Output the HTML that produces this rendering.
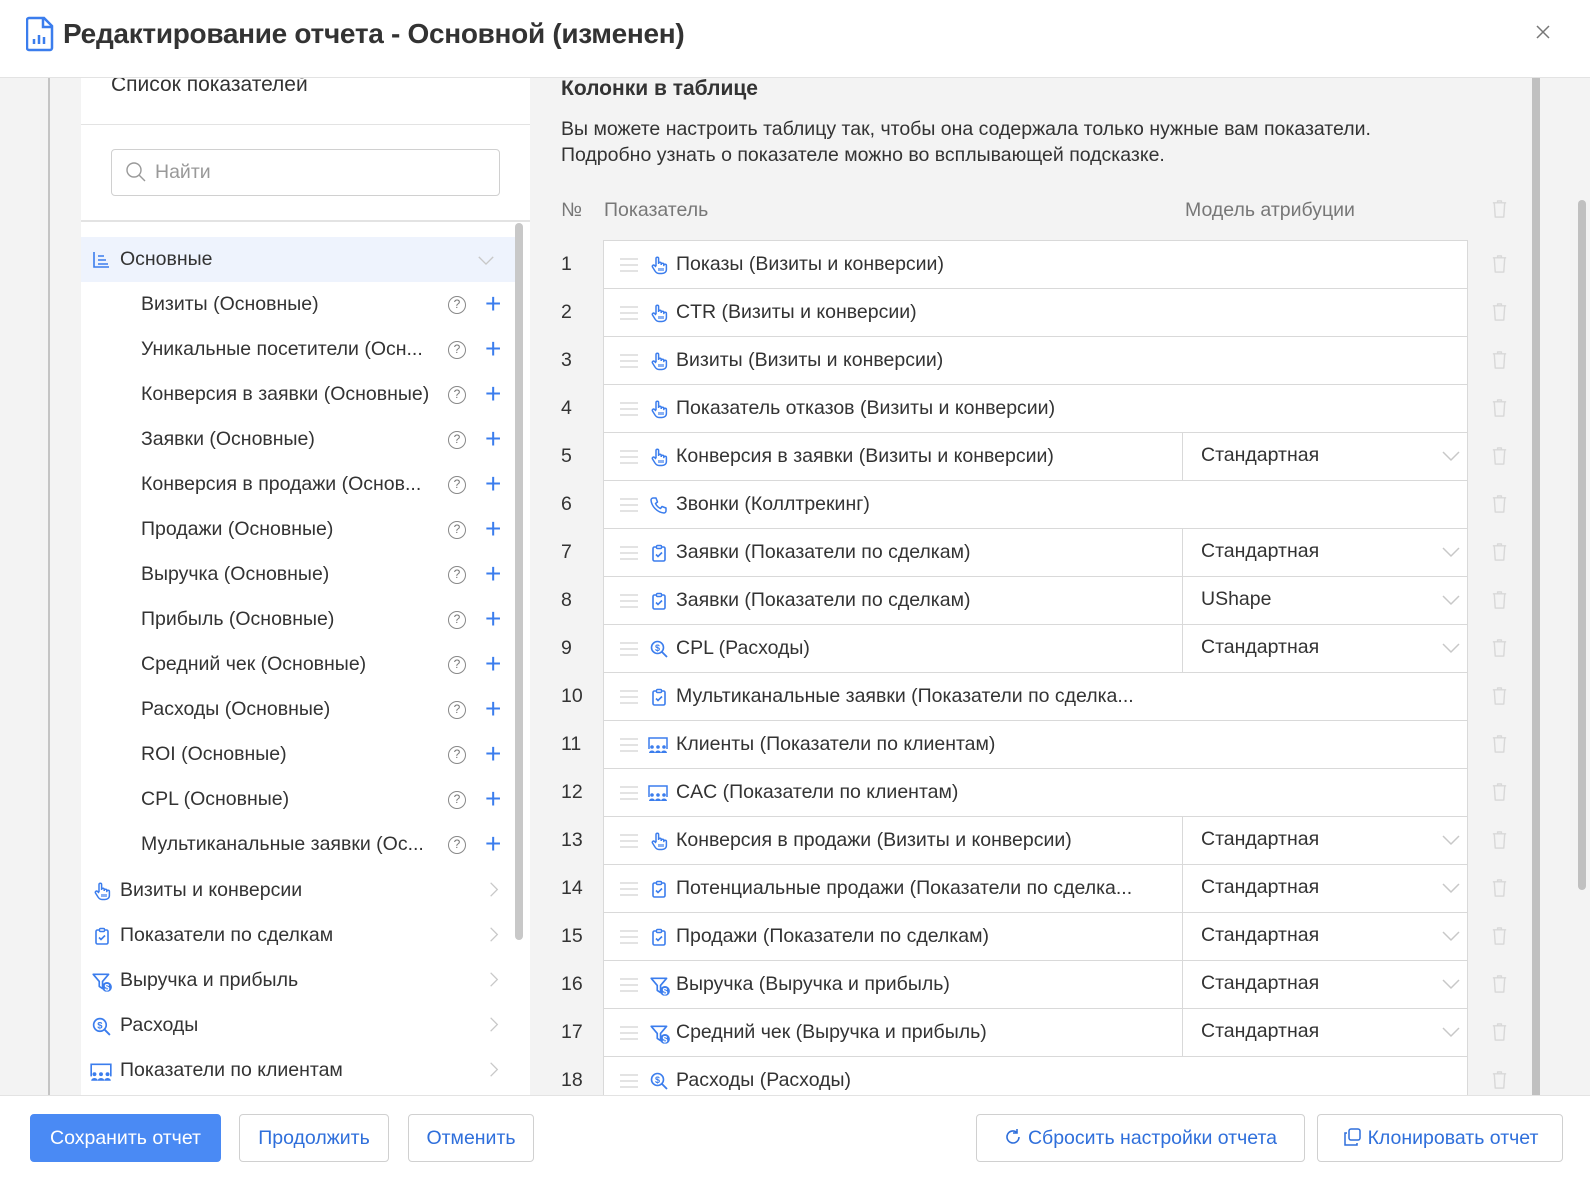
<!DOCTYPE html>
<html><head><meta charset="utf-8"><style>
*{box-sizing:border-box;margin:0;padding:0}
body{width:1590px;height:1178px;overflow:hidden;background:#f3f3f3;font-family:"Liberation Sans",sans-serif;color:#333;position:relative}
.a{position:absolute}
.hdr{left:0;top:0;width:1590px;height:78px;background:#fff;border-bottom:1px solid #e3e3e3;z-index:5}
.ttl{left:63px;top:18px;font-size:28px;font-weight:bold;color:#333;letter-spacing:-0.3px}
.lp{left:81px;top:78px;width:449px;height:1020px;background:#fff}
.li{position:absolute;font-size:19.5px;color:#333;white-space:nowrap}
.q{position:absolute;left:367px;width:18px;height:18px;border:1.5px solid #888;border-radius:50%;font-size:12px;color:#777;text-align:center;line-height:15px}
.pl{position:absolute;left:404px;font-size:28px;color:#3b7ded;font-weight:300;line-height:20px}
.row{position:absolute;left:603px;width:865px;height:49px;background:#fff;border:1px solid #d9d9d9}
.num{position:absolute;left:561px;font-size:19.5px;color:#333}
.dh{position:absolute;left:16px;top:17px;width:18px;height:14px;border-top:2px solid #e3e3e3;border-bottom:2px solid #e3e3e3}
.dh:after{content:"";position:absolute;left:0;top:4px;width:18px;height:2px;background:#e3e3e3}
.ic{position:absolute;left:45px;top:14px;width:20px;height:20px}
.tx{position:absolute;left:72px;top:12px;font-size:19.5px;white-space:nowrap;color:#333}
.at{position:absolute;left:578px;top:-1px;width:287px;height:49px;border-left:1px solid #d9d9d9}
.at span{position:absolute;left:18px;top:12px;font-size:19.5px}
.at svg{position:absolute;right:8px;top:18px}
.tr{position:absolute;left:1490px}
.btn{position:absolute;top:1114px;height:48px;border:1px solid #d0d0d0;border-radius:4px;background:#fff;color:#2f6fdb;font-size:19.5px;text-align:center;line-height:46px}
</style></head><body>
<svg width="0" height="0" style="position:absolute">
<defs>
<symbol id="hand" viewBox="0 0 20 20"><path d="M7 11V3.5a1.3 1.3 0 0 1 2.6 0V9M9.6 8.5a1.3 1.3 0 0 1 2.6 0V10M12.2 9.5a1.3 1.3 0 0 1 2.6 0v1a1.3 1.3 0 0 1 2.6 0v4c0 2.5-2 4-4.5 4H10c-2 0-3-1-4-2.5L3.5 12a1.3 1.3 0 0 1 2-1.6L7 12" fill="none" stroke="#3b7ded" stroke-width="1.5" stroke-linejoin="round"/><path d="M10 13v3M12 13v3M14 13v3" stroke="#3b7ded" stroke-width="1.2"/></symbol>
<symbol id="clip" viewBox="0 0 20 20"><rect x="4" y="4" width="12" height="14" rx="1.5" fill="none" stroke="#3b7ded" stroke-width="1.6"/><rect x="7.5" y="2.5" width="5" height="3" rx="1" fill="#fff" stroke="#3b7ded" stroke-width="1.4"/><path d="M7 11.5l2 2 4-4" fill="none" stroke="#3b7ded" stroke-width="1.6"/></symbol>
<symbol id="phone" viewBox="0 0 20 20"><path d="M4 3h3l1.5 4-2 1.5c1 2.2 2.8 4 5 5L13 11.5l4 1.5v3c0 1-1 2-2 2C8.5 17.5 2.5 11.5 2 5c0-1 1-2 2-2z" fill="none" stroke="#3b7ded" stroke-width="1.5" stroke-linejoin="round"/></symbol>
<symbol id="dol" viewBox="0 0 20 20"><circle cx="8.5" cy="8.5" r="6" fill="none" stroke="#3b7ded" stroke-width="1.6"/><path d="M13 13l5 5" stroke="#3b7ded" stroke-width="1.8"/><text x="8.5" y="12" font-size="9" font-family="Liberation Sans" font-weight="bold" fill="#3b7ded" text-anchor="middle">$</text></symbol>
<symbol id="ppl" viewBox="0 0 22 20"><path d="M2 14V3h18v11" fill="none" stroke="#3b7ded" stroke-width="1.5"/><circle cx="5" cy="12" r="1.8" fill="#3b7ded"/><circle cx="11" cy="12" r="1.8" fill="#3b7ded"/><circle cx="17" cy="12" r="1.8" fill="#3b7ded"/><path d="M2 18a3 2.5 0 0 1 6 0zM8 18a3 2.5 0 0 1 6 0zM14 18a3 2.5 0 0 1 6 0z" fill="#3b7ded"/></symbol>
<symbol id="fun" viewBox="0 0 20 20"><path d="M2 3h14l-5.5 6.5V16l-3-2V9.5z" fill="none" stroke="#3b7ded" stroke-width="1.5" stroke-linejoin="round"/><circle cx="14.5" cy="14.5" r="4.5" fill="#3b7ded"/><text x="14.5" y="17.5" font-size="8" font-family="Liberation Sans" font-weight="bold" fill="#fff" text-anchor="middle">$</text></symbol>
<symbol id="trash" viewBox="0 0 20 22"><path d="M3 5h14M8 5V3h4v2M4.5 5l1 15h9l1-15" fill="none" stroke="#d8d8d8" stroke-width="1.5" stroke-linejoin="round"/></symbol>
<symbol id="chev" viewBox="0 0 20 12"><path d="M2 2l8 8 8-8" fill="none" stroke="#c8c8c8" stroke-width="1.5"/></symbol>
<symbol id="chr" viewBox="0 0 12 20"><path d="M2 2l8 8-8 8" fill="none" stroke="#c8c8c8" stroke-width="1.5"/></symbol>
</defs></svg>

<div class="a hdr">
<svg class="a" style="left:26px;top:16px" width="28" height="36" viewBox="0 0 28 36"><path d="M3 2h15l8 8v22a2 2 0 0 1-2 2H3a2 2 0 0 1-2-2V4a2 2 0 0 1 2-2z" fill="none" stroke="#3b7ded" stroke-width="2.5"/><path d="M17 2v9h9" fill="none" stroke="#3b7ded" stroke-width="2.5"/><path d="M8 28v-5M13 28v-9M18 28v-7" stroke="#3b7ded" stroke-width="2.5"/></svg>
<div class="a ttl">Редактирование отчета - Основной (изменен)</div>
<svg class="a" style="left:1536px;top:25px" width="14" height="14"><path d="M1 1l12 12M13 1L1 13" stroke="#777" stroke-width="1.5"/></svg>
</div>

<div class="a" style="left:48px;top:78px;width:2px;height:1020px;background:#c4c4c4"></div>
<div class="a lp">
<div class="li" style="left:30px;top:-5px;font-size:21px">Список показателей</div>
<div class="a" style="left:0;top:46px;width:449px;height:1px;background:#e3e3e3"></div>
<div class="a" style="left:30px;top:71px;width:389px;height:47px;border:1px solid #d0d0d0;border-radius:4px"></div>
<svg class="a" style="left:44px;top:83px" width="22" height="22"><circle cx="9" cy="9" r="7" fill="none" stroke="#999" stroke-width="1.4"/><path d="M14 14l6 6" stroke="#999" stroke-width="1.4"/></svg>
<div class="li" style="left:74px;top:83px;color:#999">Найти</div>
<div class="a" style="left:0;top:142px;width:449px;height:2px;background:#e3e3e3"></div>
<div class="a" style="left:0;top:159px;width:434px;height:45px;background:#eef3fd"></div>
<svg class="a" style="left:11px;top:173px" width="18" height="18"><path d="M2 1v15h15M6 5h6M6 9h8M6 13h10" fill="none" stroke="#3b7ded" stroke-width="1.6"/></svg>
<div class="li" style="left:39px;top:170px">Основные</div>
<svg class="a" style="left:396px;top:177px" width="18" height="11"><use href="#chev"/></svg>
<div class="a" style="left:434px;top:145px;width:8px;height:717px;background:#c8c8c8;border-radius:4px"></div>

<div class="li" style="left:60px;top:215px">Визиты (Основные)</div><div class="q" style="top:218px">?</div><div class="pl" style="top:216px">+</div>
<div class="li" style="left:60px;top:260px">Уникальные посетители (Осн...</div><div class="q" style="top:263px">?</div><div class="pl" style="top:261px">+</div>
<div class="li" style="left:60px;top:305px">Конверсия в заявки (Основные)</div><div class="q" style="top:308px">?</div><div class="pl" style="top:306px">+</div>
<div class="li" style="left:60px;top:350px">Заявки (Основные)</div><div class="q" style="top:353px">?</div><div class="pl" style="top:351px">+</div>
<div class="li" style="left:60px;top:395px">Конверсия в продажи (Основ...</div><div class="q" style="top:398px">?</div><div class="pl" style="top:396px">+</div>
<div class="li" style="left:60px;top:440px">Продажи (Основные)</div><div class="q" style="top:443px">?</div><div class="pl" style="top:441px">+</div>
<div class="li" style="left:60px;top:485px">Выручка (Основные)</div><div class="q" style="top:488px">?</div><div class="pl" style="top:486px">+</div>
<div class="li" style="left:60px;top:530px">Прибыль (Основные)</div><div class="q" style="top:533px">?</div><div class="pl" style="top:531px">+</div>
<div class="li" style="left:60px;top:575px">Средний чек (Основные)</div><div class="q" style="top:578px">?</div><div class="pl" style="top:576px">+</div>
<div class="li" style="left:60px;top:620px">Расходы (Основные)</div><div class="q" style="top:623px">?</div><div class="pl" style="top:621px">+</div>
<div class="li" style="left:60px;top:665px">ROI (Основные)</div><div class="q" style="top:668px">?</div><div class="pl" style="top:666px">+</div>
<div class="li" style="left:60px;top:710px">CPL (Основные)</div><div class="q" style="top:713px">?</div><div class="pl" style="top:711px">+</div>
<div class="li" style="left:60px;top:755px">Мультиканальные заявки (Ос...</div><div class="q" style="top:758px">?</div><div class="pl" style="top:756px">+</div>

<svg class="a" style="left:11px;top:803px" width="20" height="20"><use href="#hand"/></svg><div class="li" style="left:39px;top:801px">Визиты и конверсии</div><svg class="a" style="left:408px;top:803px" width="10" height="17"><use href="#chr"/></svg>
<svg class="a" style="left:11px;top:848px" width="20" height="20"><use href="#clip"/></svg><div class="li" style="left:39px;top:846px">Показатели по сделкам</div><svg class="a" style="left:408px;top:848px" width="10" height="17"><use href="#chr"/></svg>
<svg class="a" style="left:10px;top:893px" width="22" height="22"><use href="#fun"/></svg><div class="li" style="left:39px;top:891px">Выручка и прибыль</div><svg class="a" style="left:408px;top:893px" width="10" height="17"><use href="#chr"/></svg>
<svg class="a" style="left:10px;top:938px" width="21" height="21"><use href="#dol"/></svg><div class="li" style="left:39px;top:936px">Расходы</div><svg class="a" style="left:408px;top:938px" width="10" height="17"><use href="#chr"/></svg>
<svg class="a" style="left:8px;top:983px" width="24" height="22"><use href="#ppl"/></svg><div class="li" style="left:39px;top:981px">Показатели по клиентам</div><svg class="a" style="left:408px;top:983px" width="10" height="17"><use href="#chr"/></svg>
</div>

<div class="a" style="left:561px;top:77px;font-size:21px;font-weight:bold">Колонки в таблице</div>
<div class="a" style="left:561px;top:116px;font-size:19.5px;line-height:26px">Вы можете настроить таблицу так, чтобы она содержала только нужные вам показатели.<br>Подробно узнать о показателе можно во всплывающей подсказке.</div>
<div class="a" style="left:561px;top:199px;font-size:19.5px;color:#777">№</div>
<div class="a" style="left:604px;top:199px;font-size:19.5px;color:#777">Показатель</div>
<div class="a" style="left:1185px;top:199px;font-size:19.5px;color:#777">Модель атрибуции</div>
<svg class="a tr" style="top:198px" width="19" height="21"><use href="#trash"/></svg>
<div class="a" style="left:1532px;top:78px;width:8px;height:1020px;background:#c0c0c0"></div>
<div class="a" style="left:1578px;top:200px;width:8px;height:690px;background:#c0c0c0;border-radius:4px"></div>

<div class="num" style="top:253px">1</div><div class="row" style="top:240px"><div class="dh"></div><svg class="ic"><use href="#hand"/></svg><div class="tx">Показы (Визиты и конверсии)</div></div><svg class="a tr" style="top:253px" width="19" height="21"><use href="#trash"/></svg>
<div class="num" style="top:301px">2</div><div class="row" style="top:288px"><div class="dh"></div><svg class="ic"><use href="#hand"/></svg><div class="tx">CTR (Визиты и конверсии)</div></div><svg class="a tr" style="top:301px" width="19" height="21"><use href="#trash"/></svg>
<div class="num" style="top:349px">3</div><div class="row" style="top:336px"><div class="dh"></div><svg class="ic"><use href="#hand"/></svg><div class="tx">Визиты (Визиты и конверсии)</div></div><svg class="a tr" style="top:349px" width="19" height="21"><use href="#trash"/></svg>
<div class="num" style="top:397px">4</div><div class="row" style="top:384px"><div class="dh"></div><svg class="ic"><use href="#hand"/></svg><div class="tx">Показатель отказов (Визиты и конверсии)</div></div><svg class="a tr" style="top:397px" width="19" height="21"><use href="#trash"/></svg>
<div class="num" style="top:445px">5</div><div class="row" style="top:432px"><div class="dh"></div><svg class="ic"><use href="#hand"/></svg><div class="tx">Конверсия в заявки (Визиты и конверсии)</div><div class="at"><span>Стандартная</span><svg width="20" height="12"><use href="#chev"/></svg></div></div><svg class="a tr" style="top:445px" width="19" height="21"><use href="#trash"/></svg>
<div class="num" style="top:493px">6</div><div class="row" style="top:480px"><div class="dh"></div><svg class="ic"><use href="#phone"/></svg><div class="tx">Звонки (Коллтрекинг)</div></div><svg class="a tr" style="top:493px" width="19" height="21"><use href="#trash"/></svg>
<div class="num" style="top:541px">7</div><div class="row" style="top:528px"><div class="dh"></div><svg class="ic"><use href="#clip"/></svg><div class="tx">Заявки (Показатели по сделкам)</div><div class="at"><span>Стандартная</span><svg width="20" height="12"><use href="#chev"/></svg></div></div><svg class="a tr" style="top:541px" width="19" height="21"><use href="#trash"/></svg>
<div class="num" style="top:589px">8</div><div class="row" style="top:576px"><div class="dh"></div><svg class="ic"><use href="#clip"/></svg><div class="tx">Заявки (Показатели по сделкам)</div><div class="at"><span>UShape</span><svg width="20" height="12"><use href="#chev"/></svg></div></div><svg class="a tr" style="top:589px" width="19" height="21"><use href="#trash"/></svg>
<div class="num" style="top:637px">9</div><div class="row" style="top:624px"><div class="dh"></div><svg class="ic"><use href="#dol"/></svg><div class="tx">CPL (Расходы)</div><div class="at"><span>Стандартная</span><svg width="20" height="12"><use href="#chev"/></svg></div></div><svg class="a tr" style="top:637px" width="19" height="21"><use href="#trash"/></svg>
<div class="num" style="top:685px">10</div><div class="row" style="top:672px"><div class="dh"></div><svg class="ic"><use href="#clip"/></svg><div class="tx">Мультиканальные заявки (Показатели по сделка...</div></div><svg class="a tr" style="top:685px" width="19" height="21"><use href="#trash"/></svg>
<div class="num" style="top:733px">11</div><div class="row" style="top:720px"><div class="dh"></div><svg class="ic" style="left:42px;width:24px"><use href="#ppl"/></svg><div class="tx">Клиенты (Показатели по клиентам)</div></div><svg class="a tr" style="top:733px" width="19" height="21"><use href="#trash"/></svg>
<div class="num" style="top:781px">12</div><div class="row" style="top:768px"><div class="dh"></div><svg class="ic" style="left:42px;width:24px"><use href="#ppl"/></svg><div class="tx">CAC (Показатели по клиентам)</div></div><svg class="a tr" style="top:781px" width="19" height="21"><use href="#trash"/></svg>
<div class="num" style="top:829px">13</div><div class="row" style="top:816px"><div class="dh"></div><svg class="ic"><use href="#hand"/></svg><div class="tx">Конверсия в продажи (Визиты и конверсии)</div><div class="at"><span>Стандартная</span><svg width="20" height="12"><use href="#chev"/></svg></div></div><svg class="a tr" style="top:829px" width="19" height="21"><use href="#trash"/></svg>
<div class="num" style="top:877px">14</div><div class="row" style="top:864px"><div class="dh"></div><svg class="ic"><use href="#clip"/></svg><div class="tx">Потенциальные продажи (Показатели по сделка...</div><div class="at"><span>Стандартная</span><svg width="20" height="12"><use href="#chev"/></svg></div></div><svg class="a tr" style="top:877px" width="19" height="21"><use href="#trash"/></svg>
<div class="num" style="top:925px">15</div><div class="row" style="top:912px"><div class="dh"></div><svg class="ic"><use href="#clip"/></svg><div class="tx">Продажи (Показатели по сделкам)</div><div class="at"><span>Стандартная</span><svg width="20" height="12"><use href="#chev"/></svg></div></div><svg class="a tr" style="top:925px" width="19" height="21"><use href="#trash"/></svg>
<div class="num" style="top:973px">16</div><div class="row" style="top:960px"><div class="dh"></div><svg class="ic" style="width:22px;height:22px"><use href="#fun"/></svg><div class="tx">Выручка (Выручка и прибыль)</div><div class="at"><span>Стандартная</span><svg width="20" height="12"><use href="#chev"/></svg></div></div><svg class="a tr" style="top:973px" width="19" height="21"><use href="#trash"/></svg>
<div class="num" style="top:1021px">17</div><div class="row" style="top:1008px"><div class="dh"></div><svg class="ic" style="width:22px;height:22px"><use href="#fun"/></svg><div class="tx">Средний чек (Выручка и прибыль)</div><div class="at"><span>Стандартная</span><svg width="20" height="12"><use href="#chev"/></svg></div></div><svg class="a tr" style="top:1021px" width="19" height="21"><use href="#trash"/></svg>
<div class="num" style="top:1069px">18</div><div class="row" style="top:1056px"><div class="dh"></div><svg class="ic"><use href="#dol"/></svg><div class="tx">Расходы (Расходы)</div></div><svg class="a tr" style="top:1069px" width="19" height="21"><use href="#trash"/></svg>

<div class="a" style="left:0;top:1095px;width:1590px;height:83px;background:#fff;border-top:1px solid #e3e3e3"></div>
<div class="btn" style="left:30px;width:191px;background:#4a8af4;border-color:#4a8af4;color:#fff">Сохранить отчет</div>
<div class="btn" style="left:239px;width:150px">Продолжить</div>
<div class="btn" style="left:408px;width:126px">Отменить</div>
<div class="btn" style="left:976px;width:329px"><svg width="18" height="18" style="vertical-align:-2px;margin-right:6px"><path d="M15 9a6 6 0 1 1-2-4.5M13 1v4h-4" fill="none" stroke="#2f6fdb" stroke-width="1.6"/></svg>Сбросить настройки отчета</div>
<div class="btn" style="left:1317px;width:246px"><svg width="20" height="20" style="vertical-align:-3px;margin-right:6px"><rect x="7" y="2" width="11" height="11" rx="2" fill="none" stroke="#2f6fdb" stroke-width="1.5"/><path d="M5 6H3v12h12v-2" fill="none" stroke="#2f6fdb" stroke-width="1.5"/></svg>Клонировать отчет</div>
</body></html>
